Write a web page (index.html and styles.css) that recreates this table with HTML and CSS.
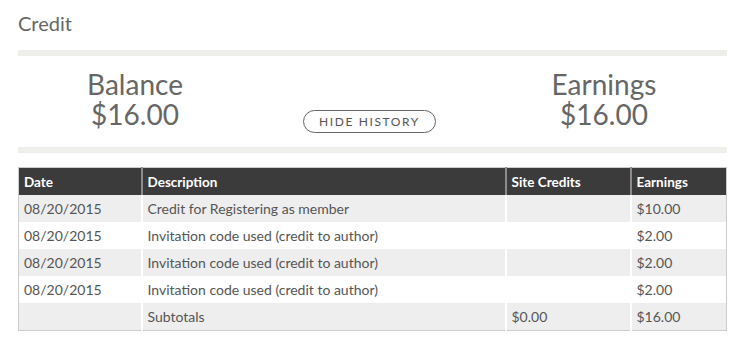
FILE: index.html
```html
<!DOCTYPE html>
<html lang="en">
<head>
    <meta charset="UTF-8">
    <meta name="viewport" content="width=device-width, initial-scale=1.0">
    <title>Credit</title>
    <link rel="stylesheet" href="styles.css">
</head>
<body>

<div class="page">
    <h2 class="page-title">Credit</h2>

    <div class="summary">
        <div class="stat stat-left">
            <div class="stat-label">Balance</div>
            <div class="stat-value">$16.00</div>
        </div>
        <div class="toggle">
            <button type="button" class="btn-outline">HIDE HISTORY</button>
        </div>
        <div class="stat stat-right">
            <div class="stat-label">Earnings</div>
            <div class="stat-value">$16.00</div>
        </div>
    </div>

    <table class="history">
        <colgroup>
            <col class="col-date">
            <col class="col-desc">
            <col class="col-credits">
            <col class="col-earn">
        </colgroup>
        <thead>
            <tr>
                <th>Date</th>
                <th>Description</th>
                <th>Site Credits</th>
                <th>Earnings</th>
            </tr>
        </thead>
        <tbody>
            <tr>
                <td>08/20/2015</td>
                <td>Credit for Registering as member</td>
                <td></td>
                <td>$10.00</td>
            </tr>
            <tr>
                <td>08/20/2015</td>
                <td>Invitation code used (credit to author)</td>
                <td></td>
                <td>$2.00</td>
            </tr>
            <tr>
                <td>08/20/2015</td>
                <td>Invitation code used (credit to author)</td>
                <td></td>
                <td>$2.00</td>
            </tr>
            <tr>
                <td>08/20/2015</td>
                <td>Invitation code used (credit to author)</td>
                <td></td>
                <td>$2.00</td>
            </tr>
            <tr class="subtotal">
                <td></td>
                <td>Subtotals</td>
                <td>$0.00</td>
                <td>$16.00</td>
            </tr>
        </tbody>
    </table>
</div>

</body>
</html>
```

FILE: styles.css
```css
body {
    font-family: Lato, "Open Sans", Arial, sans-serif;
    background-color: #fff;
    margin: 0;
    padding: 0;
    color: #555;
}
.page {
    width: 709px;
    margin-left: 18px;
}
.page-title {
    font-size: 20px;
    line-height: 24px;
    font-weight: 400;
    color: #666;
    margin: 11px 0 15px;
}
.summary {
    display: grid;
    grid-template-columns: 234px 1fr 246px;
    align-items: end;
    padding: 13px 0 14px;
    border-top: 6px solid #eeeeea;
    border-bottom: 6px solid #eeeeea;
}
.stat {
    font-size: 28px;
    color: #666;
    text-align: center;
    padding-bottom: 4px;
}
.stat-label, .stat-value {
    height: 30px;
    line-height: 30px;
}
.toggle {
    text-align: center;
    padding-left: 6px;
}
.btn-outline {
    font-family: Lato, "Open Sans", Arial, sans-serif;
    font-size: 12px;
    letter-spacing: 1.6px;
    color: #555;
    background-color: #fff;
    border: 1px solid #666;
    border-radius: 12px;
    height: 23px;
    width: 133px;
    padding: 0;
    cursor: pointer;
}
.history {
    width: 100%;
    margin-top: 14px;
    border-collapse: collapse;
    border: 1px solid #ccc;
    font-size: 14px;
}
.col-date {
    width: 123px;
}
.col-credits {
    width: 125px;
}
.col-earn {
    width: 96px;
}
.history th {
    background-color: #3b3b3b;
    color: #fff;
    font-weight: 700;
    font-size: 13.5px;
    text-align: left;
    height: 27px;
    padding: 0 5px;
    border-left: 2px solid #8c8c8c;
}
.history td {
    height: 27px;
    padding: 0 5px;
    border-left: 2px solid #fff;
    color: #555;
}
.history th:first-child, .history td:first-child {
    border-left: none;
}
.history tbody tr:nth-child(odd) td {
    background-color: #eee;
}
```
